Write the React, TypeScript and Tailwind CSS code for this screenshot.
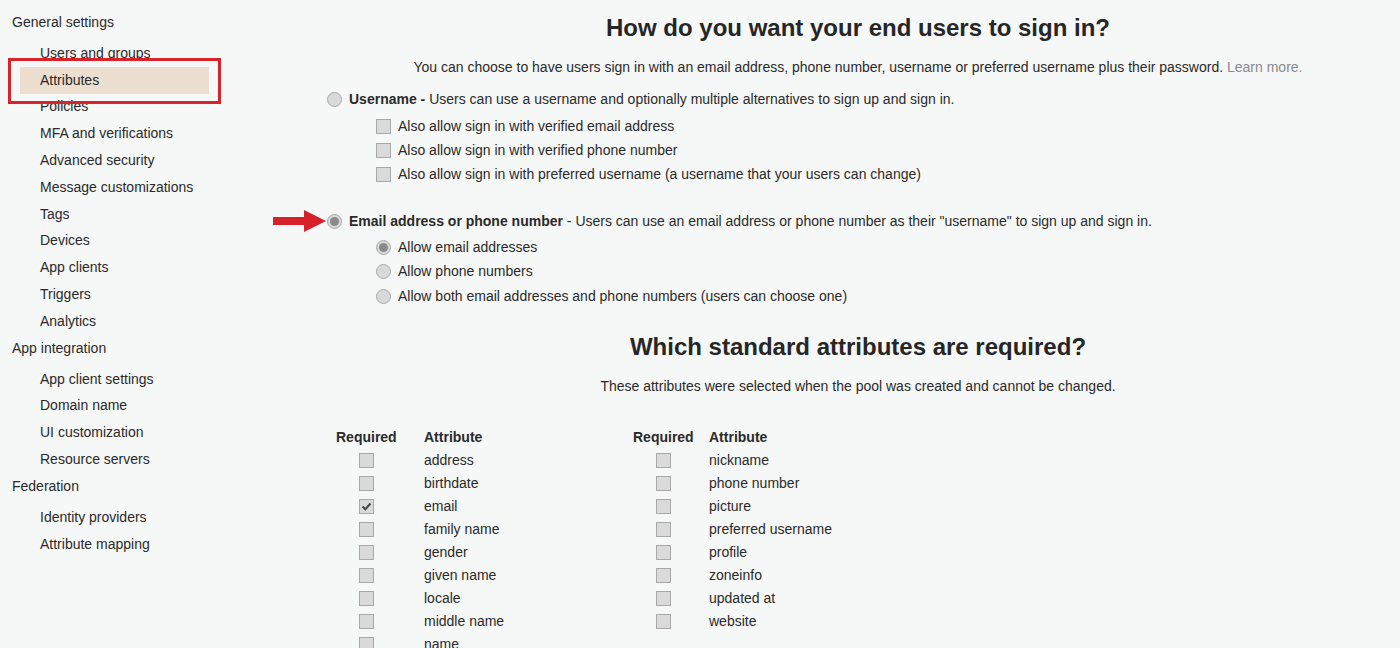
import React from "react";

const font = { fontFamily: '"Liberation Sans", Arial, sans-serif' };

function Radio({ checked = false }: { checked?: boolean }) {
  return (
    <span className="inline-flex h-[15px] w-[15px] shrink-0 items-center justify-center rounded-full border border-[#a8a8a8] bg-[#d9d9d9]">
      {checked && <span className="h-[9px] w-[9px] rounded-full bg-[#8a8a8a]" />}
    </span>
  );
}

function Checkbox({ checked = false }: { checked?: boolean }) {
  return (
    <span className="inline-flex h-[15px] w-[15px] shrink-0 items-center justify-center border border-[#a8a8a8] bg-[#dadada]">
      {checked && (
        <svg width="11" height="11" viewBox="0 0 11 11">
          <path d="M1.5 5.5 L4.3 8.2 L9.5 2.5" fill="none" stroke="#4a4a4a" strokeWidth="2.2" />
        </svg>
      )}
    </span>
  );
}

const sidebar: { title: string; items: string[] }[] = [
  {
    title: "General settings",
    items: [
      "Users and groups",
      "Attributes",
      "Policies",
      "MFA and verifications",
      "Advanced security",
      "Message customizations",
      "Tags",
      "Devices",
      "App clients",
      "Triggers",
      "Analytics",
    ],
  },
  {
    title: "App integration",
    items: ["App client settings", "Domain name", "UI customization", "Resource servers"],
  },
  { title: "Federation", items: ["Identity providers", "Attribute mapping"] },
];

const leftAttrs: [string, boolean][] = [
  ["address", false],
  ["birthdate", false],
  ["email", true],
  ["family name", false],
  ["gender", false],
  ["given name", false],
  ["locale", false],
  ["middle name", false],
  ["name", false],
];
const rightAttrs: [string, boolean][] = [
  ["nickname", false],
  ["phone number", false],
  ["picture", false],
  ["preferred username", false],
  ["profile", false],
  ["zoneinfo", false],
  ["updated at", false],
  ["website", false],
];

function AttrTable({ rows, gap }: { rows: [string, boolean][]; gap: string }) {
  return (
    <div className="flex flex-col">
      <div className="flex h-[23px] items-center font-bold">
        <span className="w-[60px] whitespace-nowrap">Required</span>
        <span className={gap}>Attribute</span>
      </div>
      {rows.map(([name, c]) => (
        <div key={name} className="flex h-[23px] items-center">
          <span className="flex w-[60px] justify-center">
            <Checkbox checked={c} />
          </span>
          <span className={gap}>{name}</span>
        </div>
      ))}
    </div>
  );
}

export default function App() {
  return (
    <div
      className="flex h-[648px] w-[1400px] overflow-hidden bg-[#f6f7f7] text-[14px] text-[#2a2a2a]"
      style={font}
    >
      {/* Sidebar */}
      <aside className="relative w-[260px] shrink-0 pt-[9px]">
        {sidebar.map((g) => (
          <div key={g.title}>
            <div className="h-[31px] pl-[12px] leading-[27px]">{g.title}</div>
            {g.items.map((it) =>
              it === "Attributes" ? (
                <div key={it} className="flex h-[26.8px] items-center">
                  <div className="ml-[20px] flex h-[27px] w-[189px] items-center bg-[#ecdfcf] pl-[20px]">
                    {it}
                  </div>
                </div>
              ) : (
                <div key={it} className="flex h-[26.8px] items-center pl-[40px]">
                  {it}
                </div>
              )
            )}
          </div>
        ))}
        <div className="absolute left-[8px] top-[58px] h-[46px] w-[213px] border-[3px] border-[#d9232b]" />
      </aside>

      {/* Main */}
      <main className="flex-1 pl-[56px] pt-[13px]">
        <h1 className="text-center text-[24px] font-bold leading-[30px] text-[#262626]">
          How do you want your end users to sign in?
        </h1>
        <p className="mt-[14px] text-center leading-[20px]">
          You can choose to have users sign in with an email address, phone number, username or preferred username plus
          their password. <span className="text-[#8a8a8a]">Learn more.</span>
        </p>

        <div className="mt-[10px] pl-[11px]">
          <div className="flex h-[24px] items-center gap-[7px]">
            <Radio />
            <span>
              <b>Username -</b> Users can use a username and optionally multiple alternatives to sign up and sign in.
            </span>
          </div>
          <div className="mt-[3px] pl-[49px]">
            {[
              "Also allow sign in with verified email address",
              "Also allow sign in with verified phone number",
              "Also allow sign in with preferred username (a username that your users can change)",
            ].map((t) => (
              <div key={t} className="flex h-[24px] items-center gap-[7px]">
                <Checkbox />
                <span>{t}</span>
              </div>
            ))}
          </div>

          <div className="relative mt-[23px] flex h-[24px] items-center gap-[7px]">
            <svg
              className="absolute left-[-54px] top-[0px]"
              width="54"
              height="24"
              viewBox="0 0 54 24"
            >
              <path d="M0 8 L31 8 L31 1 L53 12 L31 23 L31 16 L0 16 Z" fill="#d6212b" />
            </svg>
            <Radio checked />
            <span>
              <b>Email address or phone number</b> - Users can use an email address or phone number as their
              &quot;username&quot; to sign up and sign in.
            </span>
          </div>
          <div className="mt-[2px] pl-[49px]">
            {[
              ["Allow email addresses", true],
              ["Allow phone numbers", false],
              ["Allow both email addresses and phone numbers (users can choose one)", false],
            ].map(([t, c]) => (
              <div key={t as string} className="flex h-[24.5px] items-center gap-[7px]">
                <Radio checked={c as boolean} />
                <span>{t as string}</span>
              </div>
            ))}
          </div>
        </div>

        <h2 className="mt-[23px] text-center text-[24px] font-bold leading-[30px] text-[#262626]">
          Which standard attributes are required?
        </h2>
        <p className="mt-[14px] text-center leading-[20px]">
          These attributes were selected when the pool was created and cannot be changed.
        </p>

        <div className="mt-[30px] flex pl-[20px]">
          <div className="w-[297px]">
            <AttrTable rows={leftAttrs} gap="ml-[28px]" />
          </div>
          <AttrTable rows={rightAttrs} gap="ml-[16px]" />
        </div>
      </main>
    </div>
  );
}
